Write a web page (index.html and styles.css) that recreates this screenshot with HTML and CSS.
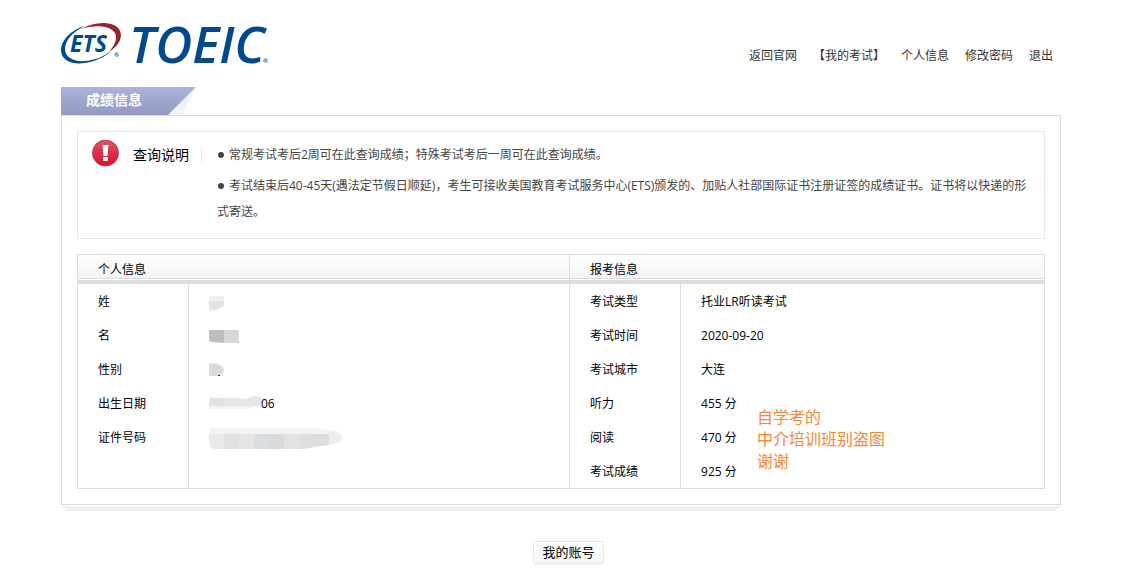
FILE: index.html
```html
<!DOCTYPE html>
<html lang="zh-CN">
<head>
<meta charset="utf-8">
<title>成绩信息</title>
<link rel="stylesheet" href="styles.css">
</head>
<body>
<div class="page">
  <header class="header">
    <svg class="logo" width="208" height="46" viewBox="0 0 208 46" role="img" aria-label="ETS TOEIC">
      <path d="M24 4C9 8 0 19 0 28c0 10 10 15 24 13 11-2 20-6 26-12-8 6-16 9-25 10C14 40 4 36 4 27 4 19 11 10 24 4z" fill="#00498c"/>
      <path d="M20 7C34-1 52-1 58 7c5 7 0 17-10 23 5-6 9-13 6-19C50 4 35 2 20 7z" fill="#942330"/>
      <text class="logo-ets" x="9" y="30">ETS</text>
      <text class="logo-reg" x="53" y="35">®</text>
      <text class="logo-toeic" x="68" y="41">TOEIC</text>
      <text class="logo-reg" x="202" y="41">®</text>
    </svg>
    <nav class="nav">
      <a href="#">返回官网</a>
      <a href="#">【我的考试】</a>
      <a href="#">个人信息</a>
      <a href="#">修改密码</a>
      <a href="#">退出</a>
    </nav>
  </header>

  <main>
    <h1 class="tab">成绩信息
      <svg class="tab-edge" width="28" height="28" viewBox="0 0 28 28" aria-hidden="true">
        <defs>
          <linearGradient id="edge" x1="0" y1="0" x2="0" y2="1"><stop offset="0" stop-color="#aab3d9"/><stop offset="1" stop-color="#9299c2"/></linearGradient>
        </defs>
        <path d="M27 1 15 28H1z" fill="#f2f2f2"/>
        <path d="M0 0h28L0 28z" fill="url(#edge)"/>
      </svg>
    </h1>
    <div class="panel">
      <section class="notice">
        <svg class="alert" width="28" height="28" viewBox="0 0 28 28" aria-hidden="true">
          <defs>
            <linearGradient id="red" x1="0" y1="0" x2="0" y2="1"><stop offset="0" stop-color="#e0566a"/><stop offset=".5" stop-color="#dc3049"/><stop offset="1" stop-color="#d90f2c"/></linearGradient>
          </defs>
          <circle cx="13.5" cy="13" r="13" fill="url(#red)" stroke="#b52a42" stroke-width=".8"/>
          <path d="M10.500 5h6l-1 11h-4z" fill="#fff"/>
          <rect x="11" y="17" width="5" height="4" rx="1" fill="#fff"/>
        </svg>
        <h2 class="notice-title">查询说明</h2>
        <ul class="notice-list">
          <li>常规考试考后2周可在此查询成绩；特殊考试考后一周可在此查询成绩。</li>
          <li>考试结束后40-45天(遇法定节假日顺延)，考生可接收美国教育考试服务中心(ETS)颁发的、加贴人社部国际证书注册证签的成绩证书。证书将以快递的形式寄送。</li>
        </ul>
      </section>

      <div class="result">
        <table class="info">
          <colgroup><col class="col-label"><col class="col-person"><col class="col-label-exam"><col></colgroup>
          <thead>
            <tr><th colspan="2" scope="colgroup">个人信息</th><th colspan="2" scope="colgroup">报考信息</th></tr>
          </thead>
          <tbody>
            <tr>
              <th scope="row">姓</th>
              <td><svg width="24" height="16" viewBox="0 0 24 16" aria-hidden="true"><path d="M0 1h15v5H0z" fill="#efefef"/><path d="M0 6h15v5l-8 4-5 1-2-2z" fill="#e2e3e3"/></svg></td>
              <th scope="row">考试类型</th><td>托业LR听读考试</td>
            </tr>
            <tr>
              <th scope="row">名</th>
              <td><svg width="32" height="16" viewBox="0 0 32 16" aria-hidden="true"><path d="M0 1h15v13l-12-1-3-1z" fill="#bdbebe"/><path d="M15 1h14l1 2v11H15z" fill="#d7d8d8"/></svg></td>
              <th scope="row">考试时间</th><td>2020-09-20</td>
            </tr>
            <tr>
              <th scope="row">性别</th>
              <td><svg width="24" height="16" viewBox="0 0 24 16" aria-hidden="true"><path d="M0 0 8 1q7 2 7 6t-7 6H0z" fill="#dadada"/><path d="M9 12h2v1H9z" fill="#333"/></svg></td>
              <th scope="row">考试城市</th><td>大连</td>
            </tr>
            <tr>
              <th scope="row">出生日期</th>
              <td><svg width="52" height="16" viewBox="0 0 52 16" aria-hidden="true"><path d="M0 1h15v8H0z" fill="#e1e1de"/><path d="M15 1h15l6 1 8-3h6l3 3-1 7H15z" fill="#e6e6e6"/><path d="M0 9h45l-4 3H0z" fill="#f3f3f3"/></svg>06</td>
              <th scope="row">听力</th><td>455 分</td>
            </tr>
            <tr>
              <th scope="row">证件号码</th>
              <td><svg width="134" height="22" viewBox="0 0 134 22" aria-hidden="true">
                <path d="M0 1h106l22 3 5 6H0z" fill="#f2f3f2"/>
                <path d="M0 7h15v15H5q-4-2-5-7z" fill="#e9e9e9"/>
                <path d="M15 7h15v15H15z" fill="#e0e0de"/>
                <path d="M30 7h15v15H30z" fill="#e7e5e3"/>
                <path d="M45 7h15v15H45z" fill="#dadde0"/>
                <path d="M60 7h15v15H60z" fill="#d9dbdb"/>
                <path d="M75 7h15v15H75z" fill="#e1e2e4"/>
                <path d="M90 7h15v13l-9 2h-6z" fill="#dddfde"/>
                <path d="M105 7h15v11l-15 2z" fill="#dcdcda"/>
                <path d="M120 5h7l6 4v4l-5 3-8 2z" fill="#ebecf0"/>
              </svg></td>
              <th scope="row">阅读</th><td>470 分</td>
            </tr>
            <tr><th scope="row"></th><td></td><th scope="row">考试成绩</th><td>925 分</td></tr>
          </tbody>
        </table>
        <p class="watermark">自学考的<br>中介培训班别盗图<br>谢谢</p>
      </div>
    </div>
    <div class="panel-shadow"></div>
  </main>
</div>
<footer class="footer"><button type="button" class="account">我的账号</button></footer>
</body>
</html>
```
FILE: styles.css
```css
* {
  box-sizing: border-box;
}

body {
  margin: 0;
  background: #fff;
  color: #000;
  font: 12px/18px "Open Sans", "Noto Sans CJK SC", sans-serif;
}

h1, h2, p, ul {
  margin: 0;
  padding: 0;
}

svg {
  flex: none;
}

.page {
  padding: 22px 67px 0 61px;
}

.header {
  display: flex;
  justify-content: space-between;
  height: 65px;
}

.logo {
  overflow: visible;
}

.logo text {
  fill: #00498c;
  font-family: "Open Sans", sans-serif;
  font-style: italic;
  font-weight: 700;
}

.logo .logo-ets {
  font-size: 23px;
}

.logo .logo-toeic {
  font-size: 51px;
  font-weight: 600;
}

.logo .logo-reg {
  font-size: 6px;
  font-style: normal;
}

.nav {
  display: flex;
  gap: 16px;
  padding: 25px 8px 0 0;
}

.nav a {
  color: #333;
  text-decoration: none;
  white-space: nowrap;
}

.tab {
  display: flex;
  align-items: center;
  justify-content: flex-end;
  position: relative;
  width: 107px;
  height: 28px;
  padding: 0 26px 2px 0;
  background: linear-gradient(#aab3d9, #9299c2);
  color: #fff;
  font-size: 14px;
  font-weight: 700;
  white-space: nowrap;
}

.tab-edge {
  position: absolute;
  top: 0;
  left: 100%;
}

.panel {
  padding: 15px;
  border: 1px solid #dcdcdc;
}

.panel-shadow {
  height: 5px;
  margin-top: 1px;
  background: #f0f0f0;
  clip-path: polygon(0 0, 100% 0, calc(100% - 6px) 100%, 6px 100%);
}

.notice {
  display: flex;
  align-items: flex-start;
  margin-bottom: 15px;
  padding: 8px 12px 13px 14px;
  border: 1px solid #e8e8e8;
}

.notice-title {
  margin: 7px 15px 0 13px;
  padding-right: 12px;
  border-right: 1px solid #e8e8e8;
  font-size: 14px;
  font-weight: 400;
  line-height: 16px;
  white-space: nowrap;
}

.notice-list {
  padding-top: 2px;
  color: #444;
  line-height: 26px;
  list-style: none;
}

.notice-list li + li {
  margin-top: 5px;
}

.notice-list li::before {
  content: "";
  display: inline-block;
  width: 6px;
  height: 6px;
  margin: 0 5px 1px 1px;
  border-radius: 50%;
  background: #444;
}

.result {
  position: relative;
}

.info {
  width: 100%;
  border: 1px solid #dcdcdc;
  border-spacing: 0;
  table-layout: fixed;
}

.col-label {
  width: 110px;
}

.col-label-exam {
  width: 111px;
}

.col-person {
  width: 381px;
}

.info th,
.info td {
  height: 34px;
  padding: 2px 20px 0;
  font-weight: 400;
  text-align: left;
  vertical-align: middle;
}

.info thead th {
  height: 29px;
  padding-top: 4px;
  border-bottom: 4px solid #dcdcdc;
  background: linear-gradient(#dcdcdc, #dcdcdc) 0 23px / 100% 1px no-repeat, linear-gradient(#fff, #f3f3f3 23px, #fff 24px);
}

.info tr > :nth-child(2) {
  border-left: 1px solid #dcdcdc;
}

.info tbody th:nth-child(3),
.info tbody td:nth-child(4) {
  border-left: 1px solid #dcdcdc;
}

.info td svg {
  overflow: visible;
  vertical-align: middle;
}

.watermark {
  position: absolute;
  top: 152px;
  left: 680px;
  color: #fb8535;
  font-size: 16px;
  line-height: 22px;
}

.footer {
  padding: 30px 0 20px 9px;
  text-align: center;
}

.account {
  height: 24px;
  padding: 0 8px;
  border: 1px solid #e6e6e6;
  border-bottom: 3px solid #efefef;
  border-radius: 3px;
  background: linear-gradient(#fff, #f7f7f7);
  color: #000;
  font-family: inherit;
  font-size: 13px;
  line-height: 18px;
}
```
